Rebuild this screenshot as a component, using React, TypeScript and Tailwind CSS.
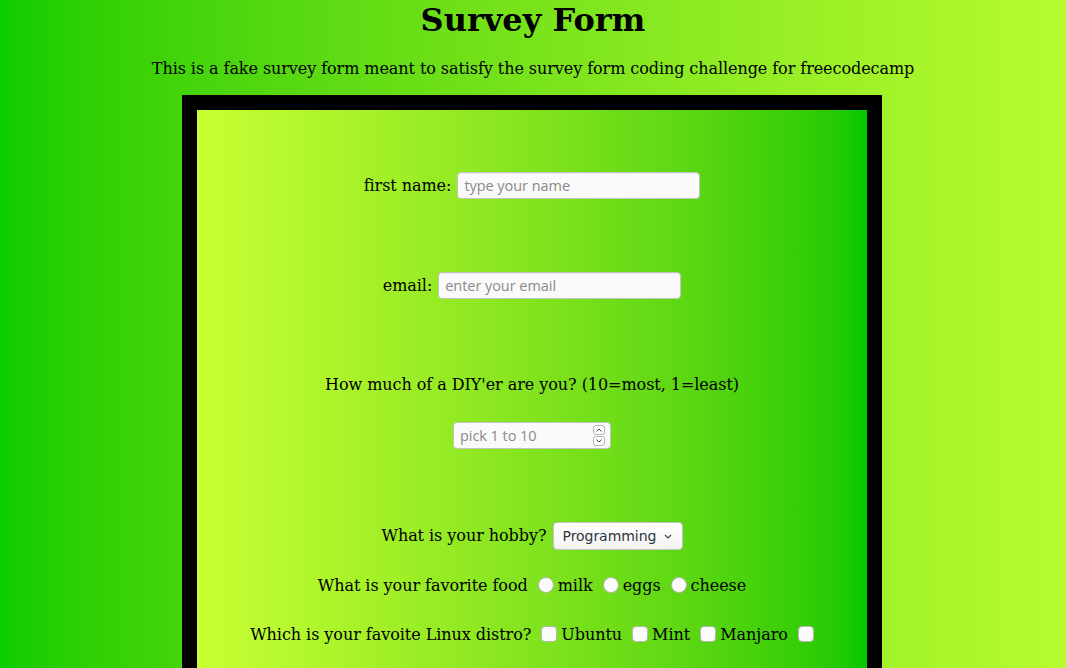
import React from "react";

const serif = { fontFamily: '"DejaVu Serif", serif' } as React.CSSProperties;

function TextInput({ placeholder, width }: { placeholder: string; width: string }) {
  return (
    <div
      className={`${width} h-[27px] rounded-[4px] border border-[#c3c3c3] bg-[#fafafa] flex items-center px-[6px] shadow-[inset_0_1px_1px_rgba(0,0,0,0.06)]`}
    >
      <span className="text-[14.5px] text-[#8a8a8a]" style={{ fontFamily: '"Open Sans", "Noto Sans", sans-serif' }}>
        {placeholder}
      </span>
    </div>
  );
}

function Radio() {
  return <span className="block w-[16px] h-[16px] rounded-full border border-[#b5b5b5] bg-[#fbfbfb] -translate-y-[1px]" />;
}

function Check() {
  return <span className="block w-[16px] h-[16px] rounded-[4px] border border-[#b5b5b5] bg-[#fbfbfb] -translate-y-[1px]" />;
}

export default function App() {
  return (
    <div
      className="w-full min-h-[668px] h-[668px] overflow-hidden bg-gradient-to-r from-[#0acc00] to-[#b6fb2e] text-black"
      style={serif}
    >
      <h1 className="text-center text-[32px] font-bold leading-[40px] pt-0">Survey Form</h1>
      <p className="text-center text-[16px] leading-[20px] mt-[19px] tracking-[-0.07px]">
        This is a fake survey form meant to satisfy the survey form coding challenge for freecodecamp
      </p>
      <div className="pr-[2px]">
        <div className="mx-auto mt-[16px] w-[700px] border-[15px] border-black">
          <div className="bg-gradient-to-r from-[#c8ff33] to-[#00c800] h-[600px] flex flex-col items-center pt-[62px] text-[16px] tracking-[-0.05px]">
            <div className="flex items-center h-[27px] gap-[6px]">
              <span>first name:</span>
              <TextInput placeholder="type your name" width="w-[243px]" />
            </div>
            <div className="flex items-center h-[27px] gap-[6px] mt-[73px]">
              <span>email:</span>
              <TextInput placeholder="enter your email" width="w-[243px]" />
            </div>
            <div className="h-[19px] leading-[19px] mt-[76px]">How much of a DIY'er are you? (10=most, 1=least)</div>
            <div className="mt-[28px] w-[158px] h-[27px] rounded-[4px] border border-[#c3c3c3] bg-[#fafafa] flex items-center pl-[6px] pr-[5px]">
              <span className="flex-1 text-[14.5px] text-[#8a8a8a]" style={{ fontFamily: '"Open Sans", "Noto Sans", sans-serif' }}>
                pick 1 to 10
              </span>
              <div className="flex flex-col gap-[1px]">
                <span className="w-[12px] h-[10px] rounded-[3px] border border-[#b5b5b5] bg-white flex items-center justify-center">
                  <svg width="8" height="6" viewBox="0 0 8 6"><path d="M1.5 4.5 L4 2 L6.5 4.5" stroke="#444" strokeWidth="1" fill="none" /></svg>
                </span>
                <span className="w-[12px] h-[10px] rounded-[3px] border border-[#b5b5b5] bg-white flex items-center justify-center">
                  <svg width="8" height="6" viewBox="0 0 8 6"><path d="M1.5 1.5 L4 4 L6.5 1.5" stroke="#444" strokeWidth="1" fill="none" /></svg>
                </span>
              </div>
            </div>
            <div className="flex items-center h-[28px] gap-[6px] mt-[73px]">
              <span>What is your hobby?</span>
              <div className="w-[130px] h-[28px] rounded-[4px] border border-[#c3c3c3] bg-gradient-to-b from-[#ffffff] to-[#f3f3f3] flex items-center justify-between pl-[9px] pr-[10px]">
                <span className="text-[14px] text-[#2e3440]" style={{ fontFamily: '"DejaVu Sans", sans-serif' }}>
                  Programming
                </span>
                <svg width="8" height="5" viewBox="0 0 8 5"><path d="M1 1 L4 4 L7 1" stroke="#444" strokeWidth="1.2" fill="none" /></svg>
              </div>
            </div>
            <div className="flex items-center h-[20px] mt-[26px]">
              <span>What is your favorite food</span>
              <span className="ml-[10px]"><Radio /></span>
              <span className="ml-[4px]">milk</span>
              <span className="ml-[10px]"><Radio /></span>
              <span className="ml-[4px]">eggs</span>
              <span className="ml-[10px]"><Radio /></span>
              <span className="ml-[4px]">cheese</span>
            </div>
            <div className="flex items-center h-[20px] mt-[29px]">
              <span>Which is your favoite Linux distro?</span>
              <span className="ml-[10px]"><Check /></span>
              <span className="ml-[4px]">Ubuntu</span>
              <span className="ml-[10px]"><Check /></span>
              <span className="ml-[4px]">Mint</span>
              <span className="ml-[10px]"><Check /></span>
              <span className="ml-[4px]">Manjaro</span>
              <span className="ml-[10px]"><Check /></span>
            </div>
          </div>
        </div>
      </div>
    </div>
  );
}
